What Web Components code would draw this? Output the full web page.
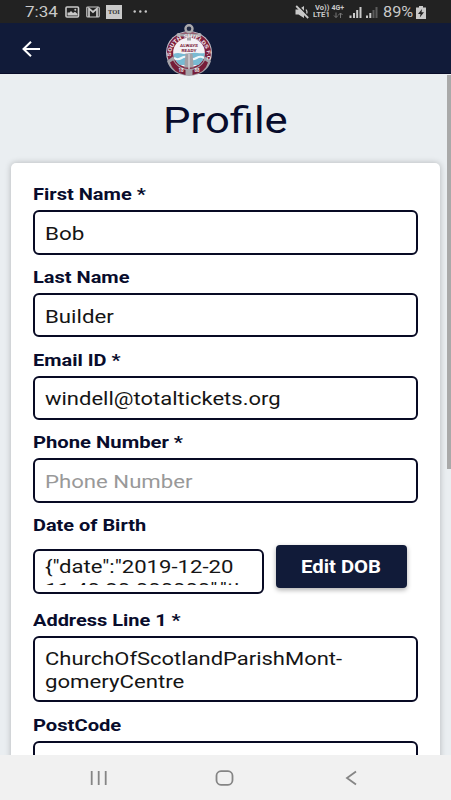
<!DOCTYPE html>
<html lang="en"><head><meta charset="utf-8"><title>Profile</title>
<style>
html,body{margin:0;height:100%;overflow:hidden}
body{font-family:Roboto,"Liberation Sans",sans-serif;color:#080c2c}
</style></head><body>
<profile-app></profile-app>
<script>
const define=(name,html,setup)=>customElements.define(name,class extends HTMLElement{
  connectedCallback(){
    if(this.shadowRoot)return;
    const t=document.createElement('template');t.innerHTML=html;
    this.attachShadow({mode:'open'}).append(t.content.cloneNode(true));
    if(setup)setup(this,this.shadowRoot);
  }
});

// Text stretched horizontally so that it fills the width given in "w".
define('wide-text',`<style>
:host{display:block;white-space:nowrap}
span{display:inline-block;transform-origin:0 50%}
</style><span><slot></slot></span>`,(el,root)=>{
  const w=parseFloat(el.getAttribute('w')),s=root.querySelector('span');
  el.style.width=w+'px';
  s.style.transform='scaleX('+w/s.offsetWidth+')';
});

define('status-bar',`<style>
:host{display:flex;align-items:center;height:22.7px;background:#222;color:#c9c9c9;box-sizing:border-box;padding:1.5px 0 0 25px}
svg{display:block;flex:none}
.time{font-size:15.5px;line-height:21px}
.pct{font-size:15.5px;line-height:21px;margin-left:5px}
.toi{width:16px;height:14px;background:#c9c9c9;color:#333;font:bold 6.5px/14px "Liberation Serif",serif;text-align:center;margin-left:6px;flex:none}
.net{font-size:7px;font-weight:700;line-height:7px;flex:none}
</style>
<wide-text class="time" w="33">7:34</wide-text>
<svg width="15" height="12" viewBox="0 0 15 12" style="margin-left:6.5px"><rect x="1" y="1" width="12.5" height="10" rx="1" fill="none" stroke="#c9c9c9" stroke-width="1.6"/><path d="M2.500 9.500V6.500h2L6 5l2 2 2-1.200L12.500 8v1.500z" fill="#c9c9c9"/><circle cx="10.300" cy="3.800" r="1" fill="#c9c9c9"/></svg>
<svg width="14" height="12" viewBox="0 0 14 12" style="margin-left:6.5px"><rect x=".8" y="1" width="12.400" height="10" rx="1" fill="none" stroke="#c9c9c9" stroke-width="1.200"/><path d="M3 11V2.500L7 6l4-3.500V11" fill="none" stroke="#c9c9c9" stroke-width="1.700"/></svg>
<div class="toi">TOI</div>
<svg width="15" height="4" viewBox="0 0 15 4" style="margin-left:11px"><g fill="#c9c9c9"><circle cx="1.700" cy="1.500" r="1.200"/><circle cx="7.300" cy="1.500" r="1.200"/><circle cx="12.800" cy="1.500" r="1.200"/></g></svg>
<svg width="14" height="14" viewBox="0 0 14 14" style="margin-left:147px"><path d="M.5 4.500h3L9 1v12L3.500 9.500h-3z" fill="#c9c9c9"/><path d="M11 4.500q2 2.500 0 5" fill="none" stroke="#c9c9c9" stroke-width="1.200"/><path d="M3 .5l11 11.500" stroke="#222" stroke-width="1.500"/><path d="M1.200 1l12 12" stroke="#c9c9c9" stroke-width="1.800"/></svg>
<div class="net" style="margin-left:4px"><wide-text w="14" style="margin-left:1.500px">Vo))</wide-text><wide-text w="16.500">LTE1</wide-text></div>
<div class="net" style="margin-left:2px"><wide-text w="13">4G+</wide-text>
<svg width="13" height="7" viewBox="0 0 13 7"><path d="M4 .5v5M2 3.500l2 2 2-2M8.500 6V1M6.500 3l2-2 2 2" fill="none" stroke="#777"/></svg></div>
<svg width="29" height="12" viewBox="0 0 29 12" style="margin-left:4px"><g fill="#c9c9c9"><path d="M.5 9.500h2V12h-2zM4 7h2v5H4zM7.200 4h2v8h-2zM10.500 1h2v11h-2zM17 9.500h2V12h-2zM20.300 7h2v5h-2z"/><path d="M23.500 4h2v8h-2zM26.500 1h2v11h-2z" opacity=".35"/></g></svg>
<wide-text class="pct" w="30.500">89%</wide-text>
<svg width="10" height="13" viewBox="0 0 10 13" style="margin-left:2.500px"><path d="M3 0h4v1.500h3V13H0V1.500h3z" fill="#c9c9c9"/><path d="M6 3L2 8h2.500L3.800 11.500 8 6.300H5.500z" fill="#222"/></svg>`);

define('club-crest',`<style>:host{display:block;width:48px;height:53px}svg{display:block;overflow:visible}text{font-family:Roboto,sans-serif;font-weight:700}</style>
<svg width="48" height="53" viewBox="0 0 48 53">
<ellipse cx="24" cy="28.500" rx="23" ry="21.500" fill="#c3bfc8"/><ellipse cx="24" cy="28.500" rx="22" ry="20.500" fill="#7d1f3d"/>
<ellipse cx="24" cy="28.500" rx="15.800" ry="14.800" fill="#f4f2f5"/>
<path d="M8.300 30q4-1.500 8-.5t8 0 8-.5 7.400 0q0 7-6 12H14.500q-5-4-6.200-11z" fill="#78bad2"/>
<path d="M9 34q3.500 2.500 7.500 0t7.500 0 7.500 0 7.500 0" fill="none" stroke="#eef7fa" stroke-width="2.200"/>
<path d="M20.500 29.500h7l1.200 14h-9.400z" fill="#a3a1a6"/><path d="M22 10.500h4v6h-4z" fill="#a3a1a6"/><path d="M24 30v15" stroke="#cfcdd1" stroke-width="1.500"/>
<path d="M2 37l6.500-5 1.500 6Q15 44.500 24 45q9-.5 14-7l1.500-6 6.500 5Q42 50.500 24 52 6 50.500 2 37z" fill="#a4a2a8"/>
<path d="M5 38.500l3-2q4.500 7.500 12.500 9.500v5Q8 49 5 38.500zM43 38.500l-3-2q-4.500 7.500-12.500 9.500v5Q40 49 43 38.500z" fill="#761d39"/>
<circle cx="24" cy="4.800" r="3.500" fill="#222a43" stroke="#aaa9ad" stroke-width="2.400"/>
<path d="M13.500 11h21" stroke="#a3a1a6" stroke-width="3.200" stroke-linecap="round"/><circle cx="13.500" cy="11" r="2" fill="#b5b3b7"/><circle cx="34.500" cy="11" r="2" fill="#b5b3b7"/>
<path id="arc" d="M6 34.500A18.200 18 0 1 1 42 34.500" fill="none"/>
<text font-size="5.200" fill="#f1e9ee"><textPath href="#arc" startOffset="2" textLength="63" lengthAdjust="spacingAndGlyphs">SOUTH SHIELDS F.C.</textPath></text>
<text x="15" y="23.200" font-size="3.800" textLength="18" lengthAdjust="spacingAndGlyphs" fill="#7d1f3d">ALWAYS</text>
<text x="16.500" y="28" font-size="3.800" textLength="15" lengthAdjust="spacingAndGlyphs" fill="#7d1f3d">READY</text>
<text x="13.500" y="48.200" font-size="4.500" fill="#eee">18</text><text x="29.500" y="48.200" font-size="4.500" fill="#eee">88</text>
</svg>`);

define('app-header',`<style>
:host{display:grid;grid-template-columns:165px 48px;height:51.500px;background:#111b39;border-bottom:1px solid #080c29;box-sizing:border-box}
.back{margin:18px 0 0 22px}club-crest{margin-top:1.300px;position:relative;z-index:1}svg{display:block}
</style>
<svg class="back" width="19" height="16" viewBox="0 0 19 16"><path d="M18 8H1.500M9 .8L1.500 8 9 15.200" fill="none" stroke="#fff" stroke-width="2"/></svg>
<club-crest></club-crest>`);

define('form-field',`<style>
:host{display:block;margin-bottom:13.300px}
wide-text{font-size:16.500px;font-weight:700;line-height:20px}
.body{display:flex;align-items:flex-start;margin-top:5.100px}
</style><wide-text></wide-text><div class="body"><slot></slot></div>`,(el,root)=>{
  const t=document.createElement('wide-text');t.textContent=el.getAttribute('label');t.setAttribute('w',el.getAttribute('lw'));
  root.querySelector('wide-text').replaceWith(t);
});

define('text-box',`<style>
:host{display:block;box-sizing:border-box;width:384.400px;height:44.300px;border:2px solid #080a24;border-radius:6px;padding:10.600px 9.400px 7px;font-size:19px;line-height:22.200px;color:#151515}
.clip{overflow:hidden;height:100%}
</style><div class="clip"><slot></slot></div>`);

define('primary-button',`<style>
:host{display:flex;align-items:center;justify-content:center;box-sizing:border-box;width:131px;height:43px;border-radius:4px;background:#111b39;color:#fff;font-size:18.500px;font-weight:700;box-shadow:0 2px 5px rgba(0,0,0,.32)}
</style><slot></slot>`);

define('nav-bar',`<style>
:host{display:grid;grid-template-columns:repeat(3,126.300px);justify-content:center;place-items:center;height:45.200px;background:#f1f1f1;box-sizing:border-box;padding:1.500px 1.500px 0 0}
svg{display:block}path,rect{fill:none;stroke:#858585;stroke-width:1.800}
</style>
<svg width="18" height="16" viewBox="0 0 18 16"><path d="M2.700 1v14M9.700 1v14M16.700 1v14"/></svg>
<svg width="20" height="16" viewBox="0 0 20 16"><rect x="1.500" y="1.200" width="16" height="13.600" rx="4.500"/></svg>
<svg width="12" height="16" viewBox="0 0 12 16"><path d="M11 1.500L2 8l9 6.500"/></svg>`);

define('profile-app',`<style>
:host{display:flex;flex-direction:column;width:451px;height:800px;background:#eaeef1}
status-bar,app-header,nav-bar{flex:none}
main{flex:1;min-height:0;overflow:hidden;position:relative}
app-header{position:relative;z-index:1}
h1{margin:0;padding:23.300px 0 0 163px;height:65.500px;font-size:37.500px;font-weight:400;line-height:46px}
.card{margin-left:11px;width:429px;height:640px;box-sizing:border-box;background:#fff;border-radius:5px;padding:22.200px 22.300px;box-shadow:0 0 6px rgba(0,0,0,.24)}
.bar{position:absolute;right:0;top:.5px;width:4.400px;height:394.500px;background:#a9a9a9}
.dob{display:flex;align-items:flex-start;margin-top:4.200px}
.dob text-box{width:231px;margin-top:4.200px;padding-top:5px;padding-bottom:7.200px}
.dob primary-button{margin-left:11.500px}
form-field.d{margin-bottom:17.100px}
text-box.tall{height:66.400px}
</style>
<status-bar></status-bar><app-header></app-header>
<main>
<h1><wide-text w="124.500">Profile</wide-text></h1>
<section class="card">
<form-field label="First Name *" lw="113"><text-box><wide-text w="39">Bob</wide-text></text-box></form-field>
<form-field label="Last Name" lw="97"><text-box><wide-text w="69">Builder</wide-text></text-box></form-field>
<form-field label="Email ID *" lw="87"><text-box><wide-text w="236">windell@totaltickets.org</wide-text></text-box></form-field>
<form-field label="Phone Number *" lw="149.500"><text-box><wide-text w="147" style="color:#999">Phone Number</wide-text></text-box></form-field>
<form-field class="d" label="Date of Birth" lw="113.500"><div class="dob"><text-box><wide-text w="188.500">{"date":"2019-12-20</wide-text><wide-text w="195">11:40:20.000000","ti</wide-text></text-box><primary-button><wide-text w="80">Edit DOB</wide-text></primary-button></div></form-field>
<form-field label="Address Line 1 *" lw="147.500"><text-box class="tall"><wide-text w="297">ChurchOfScotlandParishMont-</wide-text><wide-text w="139">gomeryCentre</wide-text></text-box></form-field>
<form-field label="PostCode" lw="88"><text-box></text-box></form-field>
</section>
<div class="bar"></div>
</main>
<nav-bar></nav-bar>`);
</script></body></html>
